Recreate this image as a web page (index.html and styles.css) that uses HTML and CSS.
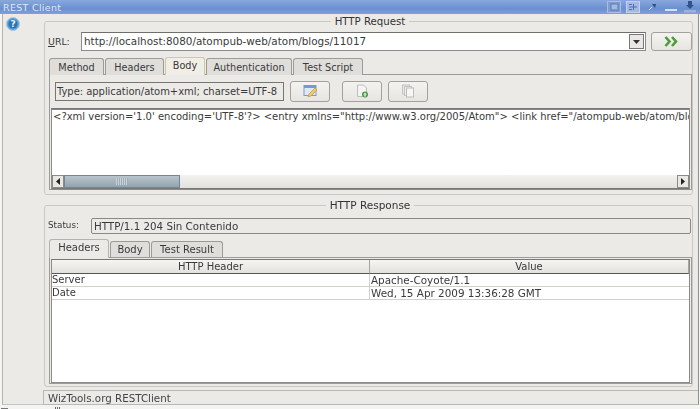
FILE: index.html
```html
<!DOCTYPE html>
<html lang="en">
<head>
<meta charset="utf-8">
<title>REST Client</title>
<link rel="stylesheet" href="styles.css">
</head>
<body>
<div class="window">
  <header class="titlebar">
    <span class="title">REST Client</span>
    <div class="wm">
      <svg class="wm-ic" viewBox="0 0 14 12"><rect x=".5" y=".5" width="13" height="11" fill="#7f9bcf" stroke="#a9bde2"/><rect x="4" y="3" width="7" height="6" fill="#a4b9df" stroke="#5f7cb4"/></svg>
      <svg class="wm-ic" viewBox="0 0 14 12"><rect x=".5" y=".5" width="13" height="11" fill="#a4bae2" stroke="#c3d2ec"/><path d="M3 6h8M3 3.500h3M3 8.500h3M7.500 3v6" stroke="#4f6ea8"/></svg>
      <svg class="wm-ic" viewBox="0 0 14 12"><path d="M4 9l3-3" stroke="#d5e0f2"/><path d="M7 3h4l-1 4z" fill="#2d4a85"/></svg>
      <svg class="wm-ic" viewBox="0 0 14 12"><rect x="1" y="8" width="12" height="2" fill="#d5e0f2"/></svg>
      <svg class="wm-ic" viewBox="0 0 14 12"><path d="M5 0h4v4h2L7 8 3 4h2z" fill="#33528c"/><rect x="1" y="9" width="12" height="2.500" fill="#9fb2d6"/></svg>
    </div>
  </header>
  <div class="frame">
    <aside class="side">
      <svg class="help" width="14" height="14" viewBox="0 0 14 14"><circle cx="7" cy="7" r="6.500" fill="#5da3d8" stroke="#a9c8e2"/><circle cx="7" cy="7" r="4.600" fill="#2f74b5"/><text x="7" y="10" text-anchor="middle" class="help-q">?</text></svg>
    </aside>
    <div class="column">
      <main class="content">
        <section class="group req">
          <div class="legend"><span>HTTP Request</span></div>
          <div class="urlrow">
            <label class="url-label"><u>U</u>RL:</label>
            <div class="combo">
              <span class="combo-text">http://localhost:8080/atompub-web/atom/blogs/11017</span>
              <span class="combo-btn"><svg width="7" height="4" viewBox="0 0 7 4"><path d="M0 0h7L3.500 4z" fill="#333"/></svg></span>
            </div>
            <button class="btn go"><svg width="16" height="11" viewBox="0 0 16 11"><path d="M1.500 1l4 4.500-4 4.500M8 1l4 4.500-4 4.500" fill="none" stroke="#4a9e35" stroke-width="2.600"/></svg></button>
          </div>
          <div class="tabs">
            <span class="tab t-method">Method</span>
            <span class="tab t-headers">Headers</span>
            <span class="tab t-body active">Body</span>
            <span class="tab t-auth">Authentication</span>
            <span class="tab t-test">Test Script</span>
          </div>
          <div class="pane req-pane">
            <div class="toolrow">
              <div class="type-field">Type: application/atom+xml; charset=UTF-8</div>
              <button class="btn tool first"><svg width="15" height="14" viewBox="0 0 15 14"><rect x="1" y="1.500" width="12" height="10" fill="#dfe8f4" stroke="#7c9cc8"/><rect x="1" y="1.500" width="12" height="2.500" fill="#6f9bd6"/><path d="M5 13l1-3 6-6 2 2-6 6z" fill="#efc868" stroke="#c79a3a" stroke-width=".7"/></svg></button>
              <button class="btn tool second"><svg width="14" height="14" viewBox="0 0 14 14"><path d="M2.500 1h6l3 3v8.500h-9z" fill="#f4f4f2" stroke="#bdbdb9"/><circle cx="10" cy="10.500" r="3" fill="#4e9a4a"/><path d="M10 8.500l2 2h-1.200v2H9.200v-2H8z" fill="#cfe8c9"/></svg></button>
              <button class="btn tool third"><svg width="14" height="14" viewBox="0 0 14 14"><rect x="1.500" y="1" width="7" height="9" fill="#e8e8e5" stroke="#c4c4c0"/><rect x="3.500" y="2.500" width="7" height="9" fill="#eeeeeb" stroke="#c4c4c0"/><rect x="5.500" y="4" width="7" height="9" fill="#f6f6f4" stroke="#bcbcb8"/></svg></button>
            </div>
            <div class="bodybox">
              <div class="code">&lt;?xml version='1.0' encoding='UTF-8'?&gt; &lt;entry xmlns="http://www.w3.org/2005/Atom"&gt; &lt;link href="/atompub-web/atom/blogs/11017"/&gt;</div>
              <div class="hscroll">
                <span class="sb-btn"><svg width="4" height="7" viewBox="0 0 4 7"><path d="M4 0v7L0 3.500z" fill="#222"/></svg></span>
                <span class="sb-thumb"><i></i></span>
                <span class="sb-track"></span>
                <span class="sb-btn"><svg width="4" height="7" viewBox="0 0 4 7"><path d="M0 0v7l4-3.500z" fill="#222"/></svg></span>
              </div>
            </div>
          </div>
        </section>
        <section class="group res">
          <div class="legend"><span>HTTP Response</span></div>
          <div class="statusrow">
            <span class="status-label">Status:</span>
            <div class="status-field">HTTP/1.1 204 Sin Contenido</div>
          </div>
          <div class="tabs tabs-res">
            <span class="tab t-rh active-plain">Headers</span>
            <span class="tab t-rb">Body</span>
            <span class="tab t-rt">Test Result</span>
          </div>
          <div class="pane res-pane">
            <div class="table">
              <div class="th c1">HTTP Header</div><div class="th c2">Value</div>
              <div class="td c1">Server</div><div class="td c2">Apache-Coyote/1.1</div>
              <div class="td c1">Date</div><div class="td c2">Wed, 15 Apr 2009 13:36:28 GMT</div>
            </div>
          </div>
        </section>
      </main>
      <footer class="status">WizTools.org RESTClient</footer>
    </div>
  </div>
  <div class="under"><i class="bit-a"></i><i class="bit-b"></i></div>
</div>
</body>
</html>
```
FILE: styles.css
```css
* { box-sizing: border-box; }
html, body { margin: 0; padding: 0; background: #f4f4f2; }
body { width: 700px; height: 409px; overflow: hidden; }
.window {
  width: 700px; height: 409px; display: flex; flex-direction: column;
  color: #3a3a3a;
  font: 10.500px/13px "DejaVu Sans", sans-serif;
  filter: blur(.4px);
}
.titlebar {
  height: 14px; flex: none; display: flex; justify-content: space-between; align-items: center;
  background: linear-gradient(#8aa8de, #6a90d2 60%, #7fa0da);
  padding: 0 3px 0 3px;
}
.title { color: #dfe7f5; font-size: 9.500px; letter-spacing: .3px; }
.wm { display: flex; gap: 5px; align-items: center; }
.wm-ic { width: 14px; height: 12px; display: block; }
.frame { height: 391px; flex: none; display: flex; margin-left: 2px; width: 697px; background: #eceae7; border-left: 1px solid #b5b5b1; border-right: 1px solid #8e8e8a; border-bottom: 1px solid #c4c3bf; }
.side { width: 41px; flex: none; padding: 3px 0 0 3px; }
.help { display: block; }
.help-q { fill: #e8f2fb; font: bold 9px "DejaVu Sans", sans-serif; }
.column { flex: 1; display: flex; flex-direction: column; min-width: 0; }
.content { flex: none; padding-top: 2px; }
.group { border: 1px solid #c9c8c4; border-radius: 3px; margin-top: 5px; width: 649px; }
.req { height: 174px; padding: 0 0 0 3px; }
.res { height: 182px; margin-top: 10px; padding: 0 0 0 3px; }
.legend { height: 0; display: flex; justify-content: center; }
.legend span { background: #eceae7; padding: 0 4px; height: 13px; margin-top: -7px; color: #333; font-size: 10.200px; }
.res .legend span { font-size: 10.500px; }
.urlrow { display: flex; align-items: center; margin-top: 10px; height: 19px; }
.url-label { width: 33px; flex: none; font-size: 9.400px; }
.combo { width: 565px; height: 19px; flex: none; display: flex; background: #fff; border: 1px solid #8b8b87; border-top-color: #6f6f6b; }
.combo-text { flex: 1; padding: 2px 0 0 2px; white-space: nowrap; font-size: 10.400px; }
.combo-btn { width: 15px; margin: 1px; background: #e9e8e4; border: 1px solid #777; display: flex; align-items: center; justify-content: center; }
.btn { padding: 0; display: flex; align-items: center; justify-content: center; background: linear-gradient(#f4f3f0, #e6e5e1); border: 1px solid #a2a19c; border-radius: 3px; flex: none; }
.go { width: 41px; height: 19px; margin-left: 5px; }
.tabs { display: flex; margin: 6px 0 0 1px; height: 18px; align-items: flex-end; font-size: 9.700px; }
.tab { display: block; height: 17px; border: 1px solid #9c9b97; border-bottom: 0; border-radius: 3px 3px 0 0; background: #dfdeda; text-align: center; padding-top: 2px; margin-right: 1px; }
.t-method { width: 55px; }
.t-headers { width: 59px; }
.t-body { width: 40px; }
.t-auth { width: 86px; }
.t-test { width: 70px; }
.active { height: 18px; background: #f0eee6; border: 1px solid #d4c79a; border-bottom: 0; padding-top: 1px; }
.active-plain { height: 19px; background: #eceae7; padding-top: 1px; border-color: #b4b3af; margin-bottom: -1px; }
.pane { border: 1px solid #9c9b97; width: 643px; margin-left: 1px; }
.req-pane { height: 116px; padding: 0 1px; margin-top: -1px; }
.toolrow { display: flex; align-items: center; height: 32px; padding-left: 4px; }
.type-field { width: 229px; height: 19px; background: #eceae7; border: 1px solid #77766f; white-space: nowrap; overflow: hidden; padding: 2px 0 0 1px; font-size: 10px; letter-spacing: -.05px; }
.tool { width: 40px; height: 21px; }
.first { margin-left: 6px; }
.second { margin-left: 12px; }
.third { margin-left: 6px; }
.bodybox { height: 82px; margin-top: 1px; background: #fff; border: 1px solid #8b8b87; border-top-color: #777; display: flex; flex-direction: column; box-shadow: 0 1px 0 #888 inset; }
.code { flex: 1; padding: 1px 0 0 1px; white-space: nowrap; overflow: hidden; font-size: 10px; }
.hscroll { height: 14px; flex: none; display: flex; background: linear-gradient(#f2f2ef, #e2e1dd); border-bottom: 1px solid #777; }
.sb-btn { width: 12px; height: 13px; flex: none; display: flex; align-items: center; justify-content: center; background: #e9e8e4; border: 1px solid #8a8a86; }
.sb-thumb { width: 116px; flex: none; background: linear-gradient(#b8c4cc, #93a4b0); border: 1px solid #76858f; display: flex; align-items: center; justify-content: center; }
.sb-thumb i { width: 12px; height: 7px; background: repeating-linear-gradient(90deg, #c8d2d8 0 1px, #9dacb6 1px 2px); }
.sb-track { flex: 1; }
.statusrow { display: flex; align-items: center; margin-top: 12px; height: 15px; }
.status-label { width: 43px; flex: none; font-size: 8.800px; }
.status-field { width: 600px; height: 16px; border: 1px solid #8a8983; border-radius: 2px; padding-left: 2px; line-height: 14px; font-size: 10.300px; }
.tabs-res { margin-top: 7px; height: 17px; font-size: 10px; }
.t-rh { width: 60px; }
.t-rb { width: 40px; }
.t-rt { width: 72px; }
.tabs-res .tab:not(.active-plain) { height: 16px; padding-top: 1px; }
.res-pane { height: 127px; padding: 1px 1px 0; }
.table { display: grid; grid-template-columns: 318px 1fr; grid-template-rows: 14px 13px 13px; height: 124px; background: #fff; border: 1px solid #8b8b87; border-top-color: #777; align-content: start; }
.th { background: linear-gradient(#f6f5f2, #e2e1dd); text-align: center; border-bottom: 1px solid #555; border-right: 1px solid #a5a5a1; line-height: 13px; font-size: 10px; }
.td { border-bottom: 1px solid #d0d0cc; white-space: nowrap; line-height: 12px; font-size: 10px; }
.td.c1 { border-right: 1px solid #d0d0cc; }
.td.c2 { padding-left: 1px; font-size: 10.400px; }
.status { height: 15px; flex: none; margin-top: 3px; margin-left: -1px; border: 1px solid #b9b8b4; border-right: 0; padding: 1px 0 0 4px; color: #444; font-size: 10.300px; }
.under { height: 4px; flex: none; display: flex; align-items: flex-end; }
.bit-a { width: 7px; height: 1px; margin-left: 1px; background: #777; }
.bit-b { width: 6px; height: 2px; margin-left: 47px; background: repeating-linear-gradient(90deg, #666 0 1px, transparent 1px 2px); }
```
